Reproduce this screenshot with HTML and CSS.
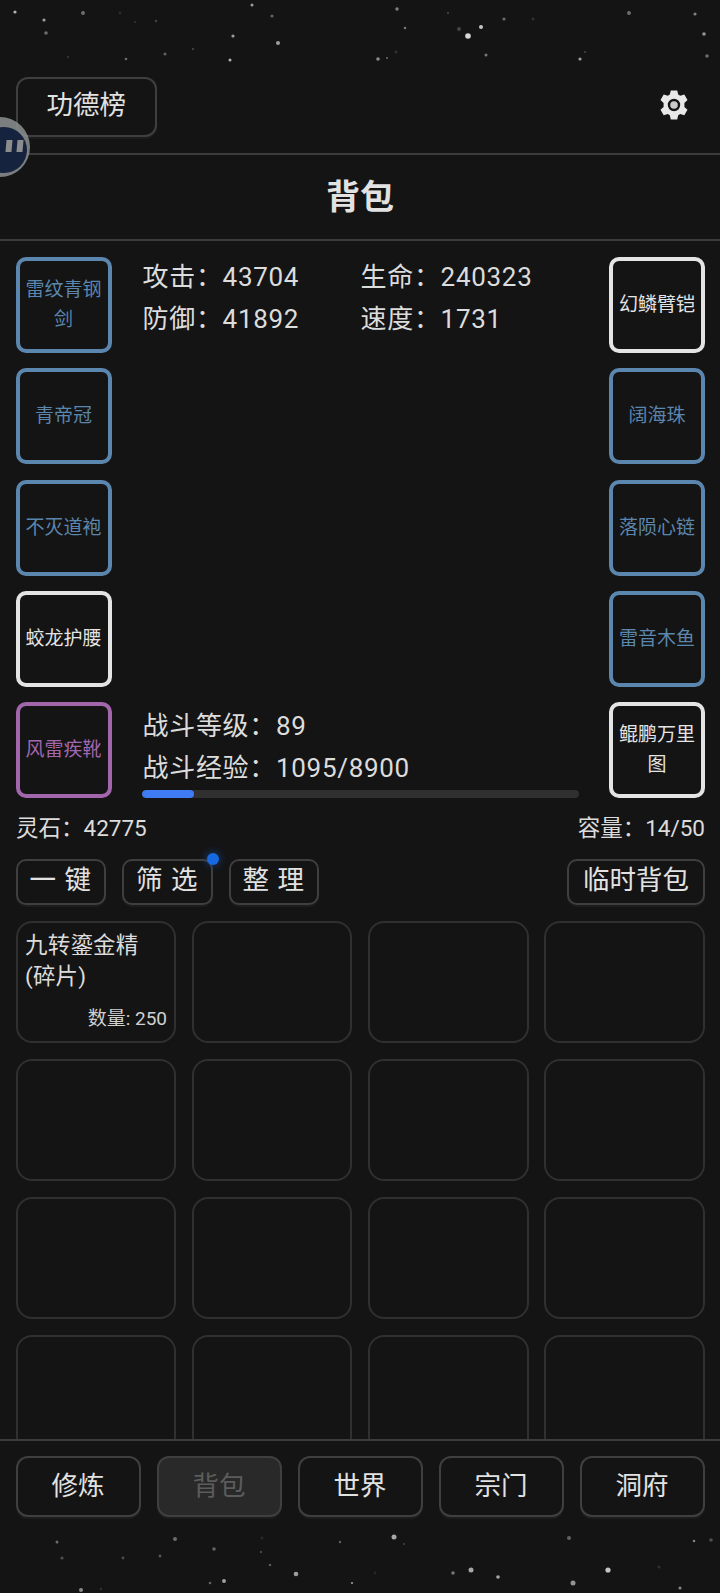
FILE: index.html
```html
<!DOCTYPE html>
<html lang="zh-CN">

<head>
    <meta charset="UTF-8">
    <meta name="viewport" content="width=device-width, initial-scale=1.0">
    <title>背包</title>
    <link rel="stylesheet" href="styles.css">
</head>

<body>
    <div class="page">

        <!-- starry strip above the header -->
        <svg class="stars stars-top" viewBox="0 0 720 77" aria-hidden="true">
            <g fill="#d8d8d8">
                <circle cx="15" cy="12" r="1.6" opacity=".8"/><circle cx="44" cy="20" r="1.6" opacity=".7"/>
                <circle cx="83" cy="13" r="2" opacity=".45"/><circle cx="46" cy="33" r="1.8" opacity=".45"/>
                <circle cx="252" cy="5" r="1.5" opacity=".7"/><circle cx="272" cy="16" r="1.6" opacity=".4"/>
                <circle cx="233" cy="36" r="1.6" opacity=".7"/><circle cx="278" cy="43" r="2" opacity=".7"/>
                <circle cx="165" cy="54" r="1.5" opacity=".4"/><circle cx="126" cy="59" r="1.3" opacity=".45"/>
                <circle cx="230" cy="60" r="1.5" opacity=".8"/><circle cx="193" cy="49" r="1" opacity=".3"/>
                <circle cx="397" cy="9" r="1.7" opacity=".55"/><circle cx="405" cy="28" r="1.3" opacity=".5"/>
                <circle cx="481" cy="27" r="2" opacity=".9"/><circle cx="468" cy="36" r="2.8" opacity="1"/>
                <circle cx="459" cy="29" r="2" opacity=".25"/><circle cx="504" cy="19" r="1.6" opacity=".45"/>
                <circle cx="486" cy="55" r="1.5" opacity=".5"/><circle cx="378" cy="59" r="1.8" opacity=".6"/>
                <circle cx="387" cy="58" r="1" opacity=".45"/><circle cx="580" cy="59" r="1.6" opacity=".7"/>
                <circle cx="585" cy="52" r="1" opacity=".25"/><circle cx="629" cy="13" r="2" opacity=".45"/>
                <circle cx="695" cy="14" r="1.6" opacity=".55"/><circle cx="704" cy="34" r="1.8" opacity=".65"/>
                <circle cx="707" cy="56" r="1.8" opacity=".45"/><circle cx="448" cy="13" r="1.2" opacity=".2"/>
                <circle cx="396" cy="52" r="1.4" opacity=".15"/><circle cx="533" cy="19" r="1.4" opacity=".15"/>
                <circle cx="156" cy="21" r="1.2" opacity=".25"/><circle cx="68" cy="57" r="1" opacity=".2"/>
                <circle cx="135" cy="22" r="1.2" opacity=".12"/><circle cx="120" cy="13" r="1.4" opacity=".12"/>
            </g>
        </svg>

        <header class="top-bar">
            <button class="btn btn-rank">功德榜</button>
            <svg class="gear" viewBox="0 0 32 32" aria-hidden="true">
                <path fill-rule="evenodd" fill="#e8e8e8" d="M12.8 1.5h6.4l1 4.1 2 1.2 4.1-1.2 3.2 5.5-3.1 2.9v3.9l3.1 2.9-3.2 5.500-4.100-1.200-2 1.200-1 4.100h-6.400l-1-4.100-2-1.200-4.100 1.200-3.200-5.500 3.100-2.900v-3.900l-3.100-2.900 3.200-5.500 4.100 1.200 2-1.200zM16 9.800a6.200 6.200 0 1 0 0 12.400 6.200 6.200 0 1 0 0-12.400z"/>
                <circle cx="16" cy="16" r="3.800" fill="#c9c9c9"/>
            </svg>
        </header>

        <h1 class="page-title">背包</h1>

        <section class="equip">
            <div class="slot-col">
                <div class="slot slot-blue">雷纹青钢剑</div>
                <div class="slot slot-blue">青帝冠</div>
                <div class="slot slot-blue">不灭道袍</div>
                <div class="slot slot-white">蛟龙护腰</div>
                <div class="slot slot-purple">风雷疾靴</div>
            </div>

            <div class="stats">
                <div class="stat-grid">
                    <div>攻击：43704</div>
                    <div>生命：240323</div>
                    <div>防御：41892</div>
                    <div>速度：1731</div>
                </div>
                <div class="battle">
                    <div>战斗等级：89</div>
                    <div>战斗经验：1095/8900</div>
                    <div class="exp-bar"><div class="exp-fill" style="width: 12%"></div></div>
                </div>
            </div>

            <div class="slot-col">
                <div class="slot slot-white">幻鳞臂铠</div>
                <div class="slot slot-blue">阔海珠</div>
                <div class="slot slot-blue">落陨心链</div>
                <div class="slot slot-blue">雷音木鱼</div>
                <div class="slot slot-white">鲲鹏万里图</div>
            </div>
        </section>

        <div class="info-row">
            <span>灵石：42775</span>
            <span>容量：14/50</span>
        </div>

        <div class="action-row">
            <div class="action-group">
                <button class="btn btn-small">一 键</button>
                <button class="btn btn-small btn-dot">筛 选</button>
                <button class="btn btn-small">整 理</button>
            </div>
            <button class="btn btn-temp">临时背包</button>
        </div>

        <div class="bag">
            <div class="card">
                <div class="card-name">九转鎏金精 (碎片)</div>
                <div class="card-qty">数量: 250</div>
            </div>
            <div class="card"></div><div class="card"></div><div class="card"></div>
            <div class="card"></div><div class="card"></div><div class="card"></div><div class="card"></div>
            <div class="card"></div><div class="card"></div><div class="card"></div><div class="card"></div>
            <div class="card"></div><div class="card"></div><div class="card"></div><div class="card"></div>
        </div>

        <nav class="bottom-nav">
            <button class="btn">修炼</button>
            <button class="btn btn-active">背包</button>
            <button class="btn">世界</button>
            <button class="btn">宗门</button>
            <button class="btn">洞府</button>
        </nav>

        <!-- starry strip below the nav -->
        <svg class="stars stars-bottom" viewBox="0 1517 720 76" aria-hidden="true">
            <g fill="#d8d8d8">
                <circle cx="57" cy="1542" r="1.5" opacity=".45"/><circle cx="175" cy="1539" r="2" opacity=".45"/>
                <circle cx="62" cy="1558" r="1.6" opacity=".3"/><circle cx="123" cy="1558" r="1.4" opacity=".3"/>
                <circle cx="160" cy="1556" r="1.4" opacity=".35"/><circle cx="214" cy="1549" r="1.8" opacity=".4"/>
                <circle cx="261" cy="1552" r="1.2" opacity=".25"/><circle cx="270" cy="1565" r="1.3" opacity=".35"/>
                <circle cx="296" cy="1574" r="2.300" opacity=".7"/><circle cx="224" cy="1581" r="2" opacity=".7"/>
                <circle cx="210" cy="1583" r="1.300" opacity=".4"/><circle cx="81" cy="1590" r="2" opacity=".6"/>
                <circle cx="340" cy="1542" r="1.200" opacity=".4"/><circle cx="394" cy="1537" r="2.500" opacity=".75"/>
                <circle cx="404" cy="1544" r="1" opacity=".25"/><circle cx="569" cy="1538" r="2" opacity=".4"/>
                <circle cx="694" cy="1541" r="1.300" opacity=".55"/><circle cx="711" cy="1540" r="1.800" opacity=".3"/>
                <circle cx="471" cy="1570" r="2.500" opacity=".75"/><circle cx="453" cy="1573" r="1.800" opacity=".5"/>
                <circle cx="498" cy="1577" r="1.800" opacity=".75"/><circle cx="608" cy="1570" r="2.600" opacity=".9"/>
                <circle cx="573" cy="1583" r="2.500" opacity=".65"/><circle cx="680" cy="1588" r="1.500" opacity=".6"/>
                <circle cx="352" cy="1583" r="1.100" opacity=".7"/><circle cx="659" cy="1567" r="1.500" opacity=".15"/>
                <circle cx="262" cy="1538" r="1.400" opacity=".12"/><circle cx="375" cy="1573" r="1.400" opacity=".1"/>
                <circle cx="101" cy="1589" r="1.200" opacity=".15"/>
            </g>
        </svg>

        <!-- floating assistant ball, sits half off the left edge -->
        <div class="float-ball">
            <div class="ball-core">
                <span class="ball-eye"></span>
                <span class="ball-eye"></span>
            </div>
        </div>
    </div>
</body>

</html>
```

FILE: styles.css
```css
* {
    box-sizing: border-box;
}

body {
    margin: 0;
    background-color: #141414;
    color: #dcdcdc;
    font-family: Roboto, "Noto Sans CJK SC", sans-serif;
}

.page {
    position: relative;
    width: 720px;
    height: 1593px;
    display: flex;
    flex-direction: column;
    overflow: hidden;
}

.stars {
    display: block;
    flex: none;
    width: 720px;
}

.stars-top {
    height: 77px;
}

.stars-bottom {
    height: 76px;
}

.btn {
    background-color: #141414;
    color: #e2e2e2;
    border: 2px solid #3f3f3f;
    border-radius: 10px;
    box-shadow: 0 2px 0 rgba(255, 255, 255, 0.04);
    font-family: inherit;
    font-size: 26.5px;
    padding: 0;
}

/* header */
.top-bar {
    height: 78px;
    padding-bottom: 17px;
    padding-left: 15.5px;
    padding-right: 30px;
    display: flex;
    justify-content: space-between;
    align-items: flex-start;
    border-bottom: 2px solid #3c3c3c;
    flex: none;
}

.btn-rank {
    width: 141.5px;
    height: 60px;
    padding-bottom: 9px;
    border-radius: 12px;
}

.gear {
    width: 32px;
    height: 34px;
    margin-top: 11px;
}

.page-title {
    margin: 0;
    height: 86px;
    line-height: 84px;
    text-align: center;
    font-size: 34px;
    font-weight: 700;
    color: #e2e2e2;
    border-bottom: 2px solid #3c3c3c;
    flex: none;
}

/* equipment */
.equip {
    display: grid;
    grid-template-columns: 96px 1fr 96px;
    column-gap: 30px;
    padding: 16px 15px 0 15.5px;
    flex: none;
}

.slot-col {
    display: flex;
    flex-direction: column;
    gap: 15.25px;
}

.slot {
    height: 96px;
    border: 4px solid;
    border-radius: 10px;
    padding: 0 2px;
    display: flex;
    align-items: center;
    justify-content: center;
    text-align: center;
    font-size: 19px;
    line-height: 30px;
}

.slot-blue {
    border-color: #5b86ad;
    color: #5b86ad;
}

.slot-white {
    border-color: #e4e4e4;
    color: #e4e4e4;
}

.slot-purple {
    border-color: #a266ad;
    color: #a266ad;
}

.stats {
    display: flex;
    flex-direction: column;
    justify-content: space-between;
    font-size: 26px;
    line-height: 42px;
    letter-spacing: 0.7px;
    text-indent: 1px;
    margin-top: -1px;
}

.stat-grid {
    display: grid;
    grid-template-columns: 218px 1fr;
}

.exp-bar {
    height: 8px;
    margin-top: 1px;
    border-radius: 4px;
    background-color: #303030;
    overflow: hidden;
}

.exp-fill {
    height: 100%;
    border-radius: 4px;
    background-color: #3f7bf2;
}

/* bag toolbar */
.info-row {
    display: flex;
    justify-content: space-between;
    padding: 0 15px 0 16px;
    margin-top: 14px;
    font-size: 22.5px;
    line-height: 32px;
    flex: none;
}

.action-row {
    display: flex;
    justify-content: space-between;
    padding: 0 15px 0 15.5px;
    margin-top: 15px;
    flex: none;
}

.action-group {
    display: flex;
    gap: 16px;
}

.btn-small {
    position: relative;
    width: 90.5px;
    height: 46px;
    line-height: 1;
    letter-spacing: 1px;
    padding-bottom: 3px;
}

.btn-dot::after {
    content: "";
    position: absolute;
    top: -8px;
    right: -8px;
    width: 12px;
    height: 12px;
    border-radius: 50%;
    background-color: #1669e0;
    box-shadow: 0 0 6px 3px rgba(22, 105, 224, 0.25);
}

.btn-temp {
    width: 138px;
    height: 46px;
    line-height: 1;
    padding-bottom: 3px;
}

/* bag grid */
.bag {
    flex: 1;
    min-height: 0;
    overflow: hidden;
    margin-top: 16px;
    padding: 0 15px 0 15.5px;
    display: grid;
    grid-template-columns: repeat(4, 160.5px);
    grid-auto-rows: 122px;
    column-gap: 15.8px;
    row-gap: 16px;
}

.card {
    border: 2px solid #303030;
    border-radius: 16px;
    padding: 7px 7px 10px 7.5px;
    display: flex;
    flex-direction: column;
    justify-content: space-between;
}

.card-name {
    font-size: 22.5px;
    line-height: 31px;
    letter-spacing: 0.2px;
}

.card-qty {
    text-align: right;
    font-size: 19px;
    line-height: 24px;
    color: #d0d0d0;
}

/* bottom nav */
.bottom-nav {
    display: grid;
    grid-template-columns: repeat(5, 125px);
    column-gap: 16px;
    height: 78px;
    padding: 15px 15px 0 15.5px;
    border-top: 2px solid #3c3c3c;
    flex: none;
}

.bottom-nav .btn {
    height: 61px;
    border-radius: 12px;
    padding-bottom: 6px;
}

.bottom-nav .btn-active {
    background-color: #292929;
    color: #5c5c5c;
}

/* floating ball */
.float-ball {
    position: absolute;
    left: -30px;
    top: 117px;
    width: 60px;
    height: 60px;
    border-radius: 50%;
    background-color: rgba(140, 145, 146, 0.85);
    display: flex;
    align-items: center;
    justify-content: flex-end;
    padding-top: 5px;
    padding-right: 3px;
}

.ball-core {
    width: 46px;
    height: 46px;
    border-radius: 50%;
    background-color: #15233f;
    display: flex;
    align-items: center;
    justify-content: flex-end;
    gap: 5px;
    padding-right: 4px;
    padding-bottom: 8px;
}

.ball-eye {
    width: 6px;
    height: 12px;
    background-color: #8c8c8c;
    transform: skewX(-5deg);
}
```
